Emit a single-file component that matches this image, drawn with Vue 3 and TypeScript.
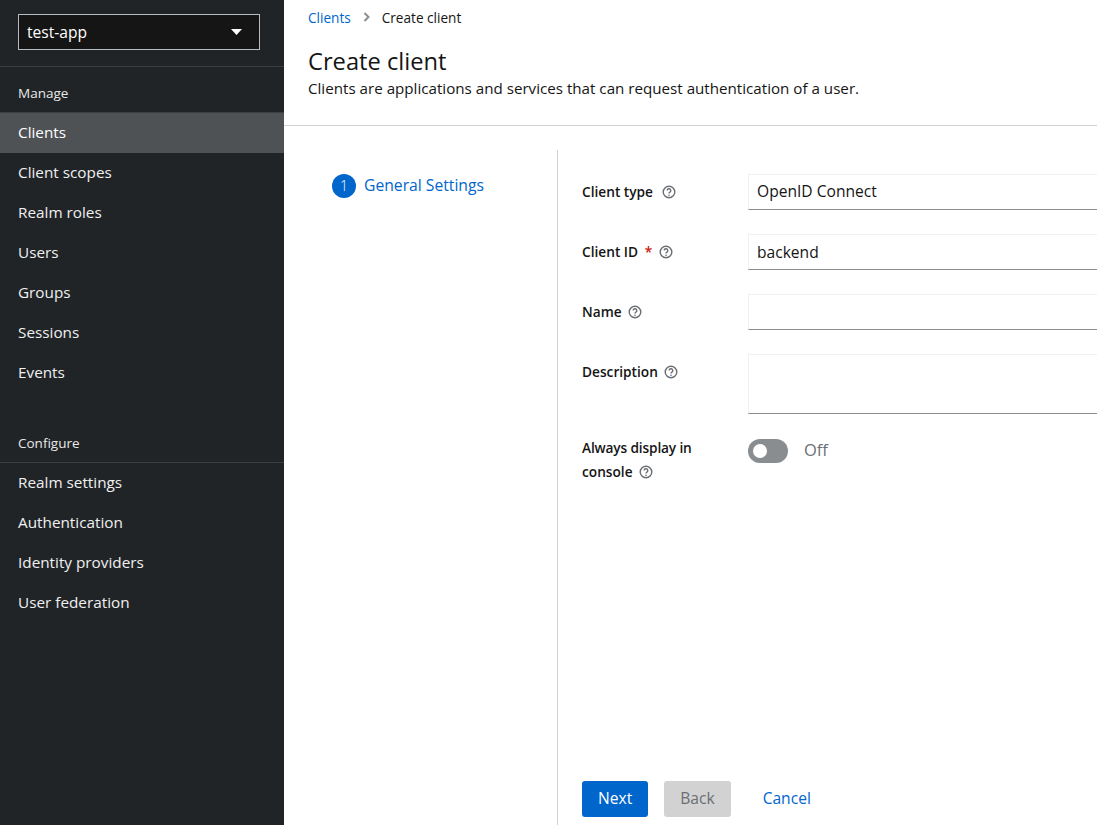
<script setup lang="ts">
const manage: string[] = ['Clients', 'Client scopes', 'Realm roles', 'Users', 'Groups', 'Sessions', 'Events']
const configure: string[] = ['Realm settings', 'Authentication', 'Identity providers', 'User federation']
</script>

<template>
  <div class="page">
    <aside class="sidebar">
      <div class="realm-wrap">
        <div class="realm">
          <span>test-app</span>
          <svg class="caret" width="11" height="6" viewBox="0 0 11 6"><path d="M0 0h11L5.5 6z" fill="#fff" /></svg>
        </div>
      </div>
      <div class="group-title manage-title">Manage</div>
      <div v-for="item in manage" :key="item" class="nav-item" :class="{ active: item === 'Clients' }">{{ item }}</div>
      <div class="group-title configure-title">Configure</div>
      <div v-for="item in configure" :key="item" class="nav-item">{{ item }}</div>
    </aside>

    <main class="main">
      <header class="head">
        <nav class="crumbs">
          <a class="link">Clients</a>
          <svg class="chev" width="7" height="10" viewBox="0 0 7 10"><path d="M1.5 1l4 4-4 4" fill="none" stroke="#8a8d90" stroke-width="2" /></svg>
          <span>Create client</span>
        </nav>
        <h1>Create client</h1>
        <p>Clients are applications and services that can request authentication of a user.</p>
      </header>

      <section class="wizard">
        <div class="steps">
          <span class="num">1</span>
          <span class="step-label">General Settings</span>
        </div>
        <div class="content">
          <form class="form" @submit.prevent>
            <div class="row">
              <label>Client type <svg class="help" viewBox="0 0 14 14"><circle cx="7" cy="7" r="5.8" /><path class="q" d="M5.2 5.6a1.8 1.8 0 1 1 2.7 1.5c-.6.4-.9.7-.9 1.4" /><circle class="dot" cx="7" cy="10.2" r=".8" /></svg></label>
              <div class="field">OpenID Connect</div>
            </div>
            <div class="row">
              <label>Client ID <span class="req">*</span> <svg class="help tight" viewBox="0 0 14 14"><circle cx="7" cy="7" r="5.8" /><path class="q" d="M5.2 5.6a1.8 1.8 0 1 1 2.7 1.5c-.6.4-.9.7-.9 1.4" /><circle class="dot" cx="7" cy="10.2" r=".8" /></svg></label>
              <div class="field second">backend</div>
            </div>
            <div class="row">
              <label>Name <svg class="help tight" viewBox="0 0 14 14"><circle cx="7" cy="7" r="5.8" /><path class="q" d="M5.2 5.6a1.8 1.8 0 1 1 2.7 1.5c-.6.4-.9.7-.9 1.4" /><circle class="dot" cx="7" cy="10.2" r=".8" /></svg></label>
              <div class="field"></div>
            </div>
            <div class="row">
              <label>Description <svg class="help tight" viewBox="0 0 14 14"><circle cx="7" cy="7" r="5.8" /><path class="q" d="M5.2 5.6a1.8 1.8 0 1 1 2.7 1.5c-.6.4-.9.7-.9 1.4" /><circle class="dot" cx="7" cy="10.2" r=".8" /></svg></label>
              <div class="field area"></div>
            </div>
            <div class="row toggle-row">
              <label><span class="long">Always display in</span><br />console <svg class="help tight" viewBox="0 0 14 14"><circle cx="7" cy="7" r="5.8" /><path class="q" d="M5.2 5.6a1.8 1.8 0 1 1 2.7 1.5c-.6.4-.9.7-.9 1.4" /><circle class="dot" cx="7" cy="10.2" r=".8" /></svg></label>
              <div class="toggle"><span class="track"><span class="knob"></span></span><span class="off">Off</span></div>
            </div>
          </form>
          <footer class="actions">
            <button class="btn primary">Next</button>
            <button class="btn disabled">Back</button>
            <button class="btn plain">Cancel</button>
          </footer>
        </div>
      </section>
    </main>
  </div>
</template>

<style>
html, body { margin: 0; overflow: hidden; }
</style>

<style scoped>
.page {
  display: flex;
  width: 1097px;
  height: 825px;
  overflow: hidden;
  background: #fff;
  color: #151515;
  font-family: "Open Sans", "Noto Sans", sans-serif;
  font-size: 16px;
}
.sidebar {
  flex: 0 0 284px;
  background: #212427;
  color: #f0f0f0;
  font-size: 15.3px;
}
.realm-wrap {
  height: 67px;
  padding: 14px 24px 0 18px;
  box-sizing: border-box;
  border-bottom: 1px solid #3c3f42;
  font-size: 15.6px;
}
.realm {
  height: 36px;
  box-sizing: border-box;
  border: 1px solid #b8bbbe;
  background: #151515;
  display: flex;
  align-items: center;
  justify-content: space-between;
  padding: 0 17px 0 8px;
  color: #fff;
}
.caret { display: block; }
.group-title {
  padding-left: 18px;
  font-size: 13.5px;
  line-height: 20px;
  color: #e8e8e8;
}
.manage-title { padding-top: 16px; height: 29px; }
.configure-title {
  margin-top: 40px;
  height: 29px;
  border-bottom: 1px solid #3c3f42;
}
.nav-item {
  height: 40px;
  line-height: 39px;
  padding-left: 18px;
  color: #f0f0f0;
}
.nav-item.active {
  background: #4f5255;
  color: #fff;
  border-top: 1px solid #3c3f42;
  height: 40px;
  line-height: 38px;
}
.main {
  flex: 1;
  min-width: 0;
  display: flex;
  flex-direction: column;
}
.head {
  height: 125px;
  box-sizing: content-box;
  padding-left: 24px;
  border-bottom: 1px solid #d2d2d2;
}
.crumbs {
  display: flex;
  align-items: center;
  height: 20px;
  margin-top: 7px;
  font-size: 13.6px;
}
.link { color: #0066cc; }
.chev { margin: 0 12px 0 12px; }
h1 {
  margin: 20px 0 0;
  font-size: 23.7px;
  font-weight: 500;
  line-height: 29px;
  font-family: "Open Sans", sans-serif;
}
p {
  margin: 1px 0 0;
  font-size: 15.17px;
  line-height: 22px;
}
.wizard {
  flex: 1;
  display: flex;
  padding-top: 24px;
  min-height: 0;
}
.steps {
  flex: 0 0 273px;
  box-sizing: border-box;
  padding: 24px 0 0 48px;
  display: flex;
  align-items: flex-start;
  gap: 8px;
}
.num {
  width: 24px;
  height: 24px;
  border-radius: 50%;
  background: #0066cc;
  color: #fff;
  font-size: 14px;
  font-weight: 300;
  line-height: 24px;
  text-align: center;
}
.step-label {
  color: #0066cc;
  line-height: 22px;
  font-size: 15.7px;
}
.content {
  flex: 1;
  border-left: 1px solid #d2d2d2;
  padding: 24px 0 0 24px;
  display: flex;
  flex-direction: column;
  min-width: 0;
}
.form {
  flex: 1;
  display: flex;
  flex-direction: column;
  gap: 24px;
}
.row {
  display: grid;
  grid-template-columns: 166px 400px;
}
label {
  font-size: 13.7px;
  font-weight: 600;
  line-height: 24px;
  padding-top: 6px;
}
.toggle-row label { padding-top: 0; margin-top: -2px; }
.long { letter-spacing: -0.15px; }
.req { color: #c9190b; margin: 0 0 0 3px; }
.help {
  width: 14px;
  height: 14px;
  margin-left: 5px;
  vertical-align: -2px;
  fill: none;
  stroke: #6a6e73;
  stroke-width: 1.4;
}
.help.tight { margin-left: 3px; }
.help .dot { fill: #6a6e73; stroke: none; }
.field {
  height: 36px;
  box-sizing: border-box;
  border: 1px solid #f0f0f0;
  border-bottom-color: #8a8d90;
  padding: 0 8px;
  line-height: 33px;
  color: #151515;
  font-size: 15.6px;
}
.field.second { line-height: 34px; }
.field.area { height: 60px; }
.toggle {
  display: flex;
  align-items: flex-start;
  gap: 16px;
}
.track {
  position: relative;
  display: block;
  width: 40px;
  height: 24px;
  margin-top: 1px;
  border-radius: 12px;
  background: #8a8d90;
}
.knob {
  position: absolute;
  left: 5px;
  top: 5px;
  width: 14px;
  height: 14px;
  border-radius: 50%;
  background: #fff;
}
.off {
  color: #6a6e73;
  line-height: 24px;
  font-size: 16.5px;
}
.actions {
  display: flex;
  gap: 16px;
  height: 44px;
}
.btn {
  height: 36px;
  border: 0;
  border-radius: 3px;
  padding: 0 16px 2px;
  font: inherit;
  font-size: 15.6px;
}
.primary { background: #0066cc; color: #fff; }
.disabled { background: #d2d2d2; color: #6a6e73; }
.plain { background: transparent; color: #0066cc; }
</style>
